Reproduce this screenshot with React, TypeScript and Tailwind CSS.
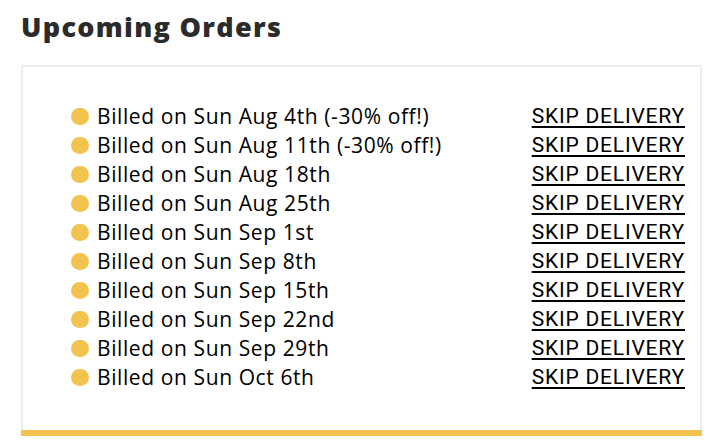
const dates = [
  'Sun Aug 4th (-30% off!)',
  'Sun Aug 11th (-30% off!)',
  'Sun Aug 18th',
  'Sun Aug 25th',
  'Sun Sep 1st',
  'Sun Sep 8th',
  'Sun Sep 15th',
  'Sun Sep 22nd',
  'Sun Sep 29th',
  'Sun Oct 6th',
];

export default function App() {
  return (
    <div className="min-h-screen bg-white px-[21px] pt-[10px]" style={{ fontFamily: '"Open Sans", "Liberation Sans", sans-serif' }}>
      <h1 className="text-[27px] font-extrabold leading-[34px] text-[#2b2b2b] tracking-[1.3px]">Upcoming Orders</h1>
      <div className="mt-[21px] w-[681px] border-2 border-b-0 border-[#eeeeee]">
        <ul className="pl-[48px] pr-[15px] pt-[35px] pb-[38px]">
          {dates.map((d) => (
            <li key={d} className="flex h-[29px] items-center justify-between">
              <div className="flex items-center gap-[8px] text-[21px] text-black tracking-[0.6px]">
                <span className="h-[17px] w-[18px] rounded-full bg-[#f2c34e]" />
                <span>Billed on {d}</span>
              </div>
              <a href="#" className="font-['Roboto'] text-[21px] text-black underline decoration-2 underline-offset-[3px] tracking-[0.8px]">
                SKIP DELIVERY
              </a>
            </li>
          ))}
        </ul>
        <div className="-mx-[2px] h-[6px] bg-[#f2c34e]" />
      </div>
    </div>
  );
}
